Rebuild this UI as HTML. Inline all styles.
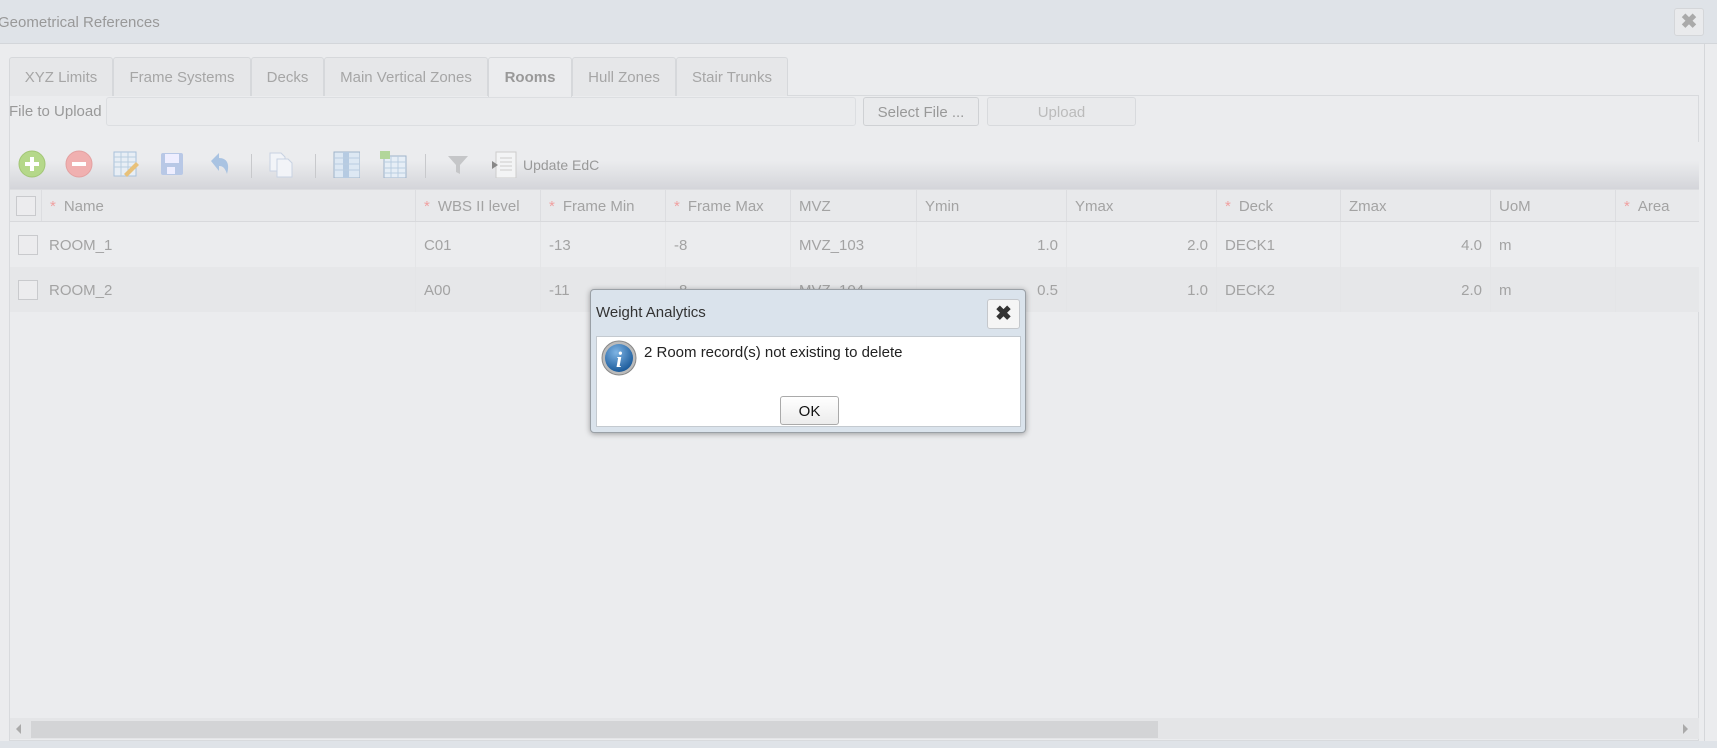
<!DOCTYPE html>
<html><head><meta charset="utf-8"><style>
*{box-sizing:border-box;margin:0;padding:0}
body{width:1717px;height:748px;overflow:hidden;background:#ebecee;font-family:"Liberation Sans",sans-serif;position:relative;color:#999}
.abs{position:absolute}
.title{left:0;top:0;width:1717px;height:44px;background:#dfe3e8;border-bottom:1px solid #d3d6da}
.title span{position:absolute;left:-2px;top:14px;font-size:15px;color:#999}
.xbtn{left:1674px;top:8px;width:30px;height:28px;border:1px solid #d4d6d9;border-radius:3px;background:#e9eaec;color:#aaa;font-size:20px;font-weight:bold;text-align:center;line-height:26px}
.rline{left:1704px;top:44px;width:1px;height:700px;background:#d5d7da}
.tab{top:57px;height:39px;border:1px solid #d6d8db;border-bottom:none;background:#e6e7e9;border-radius:3px 3px 0 0;font-size:15px;color:#a6a6a6;text-align:center;line-height:40px}
.tab.act{background:#ebecee;font-weight:bold;color:#999;height:40px}
.panel{left:9px;top:95px;width:1690px;height:646px;border:1px solid #d8dadd}
.lbl{left:9px;top:103px;font-size:15px;color:#999}
.inp{left:106px;top:97px;width:750px;height:29px;border:1px solid #dcdee1;border-radius:3px;background:#eaebed}
.btn{top:97px;height:29px;border:1px solid #cfd1d4;border-radius:3px;background:#e9eaec;font-size:15px;text-align:center;line-height:29px;color:#999}
.tb{left:10px;top:142px;width:1689px;height:47px;background:linear-gradient(#ebecee 0%,#ebecee 40%,#d4d5da 100%)}
.ic{top:150px;width:28px;height:28px}
.sep{top:154px;width:1px;height:24px;background:#c8c9cc}
.hdr{left:10px;top:189px;width:1689px;height:33px;background:#e8e9eb;border-top:1px solid #dcdde0;border-bottom:1px solid #d8d9dc}
.cell{position:absolute;top:0;height:100%;border-right:1px solid #dcdde0;font-size:15px;line-height:33px;padding-left:8px;white-space:nowrap;color:#a3a3a3}
.st{color:#f0a0a0;margin-right:8px}
.row{left:10px;width:1689px;height:45px}
.row .cell{line-height:47px;border-right:1px solid #e4e5e7}
.r{text-align:right;padding-right:8px}
.cb{position:absolute;left:8px;width:20px;height:20px;border:1px solid #c9cacd;background:#ececee}
.sb{left:10px;top:718px;width:1689px;height:21px;background:#e4e5e7}
.dlg{left:590px;top:289px;width:436px;height:144px;background:#dae3ec;border:1px solid #9aa0a6;border-radius:4px;box-shadow:0 1px 6px rgba(0,0,0,.35)}
</style></head><body>
<div class="abs title"><span>Geometrical References</span></div>
<div class="abs xbtn">✖</div>
<div class="abs rline"></div>
<div class="abs panel"></div>
<div class="abs tab" style="left:9px;width:104px">XYZ Limits</div>
<div class="abs tab" style="left:113px;width:138px">Frame Systems</div>
<div class="abs tab" style="left:251px;width:73px">Decks</div>
<div class="abs tab" style="left:324px;width:164px">Main Vertical Zones</div>
<div class="abs tab act" style="left:488px;width:84px">Rooms</div>
<div class="abs tab" style="left:572px;width:104px">Hull Zones</div>
<div class="abs tab" style="left:676px;width:112px">Stair Trunks</div>
<div class="abs lbl">File to Upload</div>
<div class="abs inp"></div>
<div class="abs btn" style="left:863px;width:116px">Select File ...</div>
<div class="abs btn" style="left:987px;width:149px;color:#bbb;border-color:#d8dadd">Upload</div>
<div class="abs tb"></div>
<svg class="abs ic" style="left:18px" viewBox="0 0 28 28"><circle cx="14" cy="14" r="13" fill="#b5d88a" stroke="#a2c676"/><path d="M14 7v14M7 14h14" stroke="#fff" stroke-width="4"/></svg>
<svg class="abs ic" style="left:65px" viewBox="0 0 28 28"><circle cx="14" cy="14" r="13" fill="#f0b0b0" stroke="#e3a0a0"/><path d="M7 14h14" stroke="#fff" stroke-width="4"/></svg>
<svg class="abs ic" style="left:112px" viewBox="0 0 28 28"><rect x="2" y="2" width="22" height="24" fill="#e8eef5" stroke="#a9c1da"/><path d="M2 7h22M2 12h22M2 17h22M9 2v24M16 2v24" stroke="#b9cde0"/><path d="M12 24l12-12 3 3-12 12z" fill="#e8c17a"/></svg>
<svg class="abs ic" style="left:158px" viewBox="0 0 28 28"><rect x="3" y="3" width="22" height="22" rx="2" fill="#b8c8e6"/><rect x="7" y="4" width="14" height="9" fill="#eef"/><rect x="9" y="17" width="8" height="7" fill="#eef"/></svg>
<svg class="abs ic" style="left:205px" viewBox="0 0 28 28"><path d="M6 11l8-8v5c8 0 11 6 8 16-2-6-4-8-8-8v5z" fill="#a9c3e2"/></svg>
<div class="abs sep" style="left:251px"></div>
<svg class="abs ic" style="left:267px" viewBox="0 0 28 28"><path d="M3 3h11l4 4v14H3z" fill="#f2f4f8" stroke="#c8d2e2"/><path d="M10 9h11l4 4v14H10z" fill="#f2f4f8" stroke="#c8d2e2"/></svg>
<div class="abs sep" style="left:315px"></div>
<svg class="abs ic" style="left:332px" viewBox="0 0 28 28"><rect x="2" y="2" width="26" height="26" fill="#dde8f3" stroke="#9fb3c9"/><rect x="11" y="2" width="6" height="26" fill="#b6cbe2"/><path d="M2 8h26M2 14h26M2 20h26" stroke="#b9cde0"/></svg>
<svg class="abs ic" style="left:379px" viewBox="0 0 28 28"><rect x="5" y="6" width="22" height="22" fill="#e6eef6" stroke="#9fb3c9"/><path d="M5 12h22M5 18h22M5 23h22M12 6v22M19 6v22" stroke="#b9cde0"/><rect x="1" y="1" width="10" height="8" fill="#b2d69a"/></svg>
<div class="abs sep" style="left:425px"></div>
<svg class="abs ic" style="left:444px" viewBox="0 0 28 28"><path d="M4 6h20l-8 9v9l-4-2v-7z" fill="#c5c6c8"/></svg>
<svg class="abs ic" style="left:490px" viewBox="0 0 28 28"><rect x="6" y="2" width="20" height="26" fill="#f3f4f5" stroke="#ccc"/><path d="M10 8h12M10 12h12M10 16h12M10 20h12" stroke="#ccc"/><path d="M2 11l6 4-6 4z" fill="#888"/></svg>
<div class="abs" style="left:523px;top:157px;font-size:14px;color:#999">Update EdC</div>

<div class="abs hdr">
<div class="cell" style="left:0;width:32px;padding:0"><div class="cb" style="top:6px;left:6px"></div></div>
<div class="cell" style="left:32px;width:374px"><span class="st">*</span>Name</div>
<div class="cell" style="left:406px;width:125px"><span class="st">*</span>WBS II level</div>
<div class="cell" style="left:531px;width:125px"><span class="st">*</span>Frame Min</div>
<div class="cell" style="left:656px;width:125px"><span class="st">*</span>Frame Max</div>
<div class="cell" style="left:781px;width:126px">MVZ</div>
<div class="cell" style="left:907px;width:150px">Ymin</div>
<div class="cell" style="left:1057px;width:150px">Ymax</div>
<div class="cell" style="left:1207px;width:124px"><span class="st">*</span>Deck</div>
<div class="cell" style="left:1331px;width:150px">Zmax</div>
<div class="cell" style="left:1481px;width:125px">UoM</div>
<div class="cell" style="left:1606px;width:83px;border:none"><span class="st">*</span>Area</div>
</div>
<div class="abs row" style="top:222px;background:#ebecee">
<div class="cell" style="left:0;width:32px;padding:0;border:none"><div class="cb" style="top:13px"></div></div>
<div class="cell" style="left:32px;width:374px;padding-left:7px">ROOM_1</div>
<div class="cell" style="left:406px;width:125px">C01</div>
<div class="cell" style="left:531px;width:125px">-13</div>
<div class="cell" style="left:656px;width:125px">-8</div>
<div class="cell" style="left:781px;width:126px">MVZ_103</div>
<div class="cell r" style="left:907px;width:150px">1.0</div>
<div class="cell r" style="left:1057px;width:150px">2.0</div>
<div class="cell" style="left:1207px;width:124px">DECK1</div>
<div class="cell r" style="left:1331px;width:150px">4.0</div>
<div class="cell" style="left:1481px;width:125px">m</div>
</div>
<div class="abs row" style="top:267px;background:#e6e7e9">
<div class="cell" style="left:0;width:32px;padding:0;border:none"><div class="cb" style="top:13px"></div></div>
<div class="cell" style="left:32px;width:374px;padding-left:7px">ROOM_2</div>
<div class="cell" style="left:406px;width:125px">A00</div>
<div class="cell" style="left:531px;width:125px">-11</div>
<div class="cell" style="left:656px;width:125px">-8</div>
<div class="cell" style="left:781px;width:126px">MVZ_104</div>
<div class="cell r" style="left:907px;width:150px">0.5</div>
<div class="cell r" style="left:1057px;width:150px">1.0</div>
<div class="cell" style="left:1207px;width:124px">DECK2</div>
<div class="cell r" style="left:1331px;width:150px">2.0</div>
<div class="cell" style="left:1481px;width:125px">m</div>
</div>
<div class="abs sb"></div>
<div class="abs" style="left:31px;top:721px;width:1127px;height:17px;background:#d3d4d6"></div>
<div class="abs" style="left:16px;top:724px;width:0;height:0;border:5px solid transparent;border-right:5px solid #aaa;border-left:0"></div>
<div class="abs" style="left:1683px;top:724px;width:0;height:0;border:5px solid transparent;border-left:5px solid #aaa;border-right:0"></div>
<div class="abs" style="left:0;top:741px;width:1717px;height:7px;background:#dfe3e8"></div>

<div class="abs dlg">
<div class="abs" style="left:5px;top:14px;font-size:15px;color:#333">Weight Analytics</div>
<div class="abs" style="left:396px;top:9px;width:33px;height:30px;border:1px solid #c5c8cc;border-radius:3px;background:#f5f5f5;text-align:center;line-height:28px;font-size:20px;font-weight:bold;color:#333">✖</div>
<div class="abs" style="left:5px;top:46px;width:425px;height:91px;background:#fff;border:1px solid #c4cad0">
<svg class="abs" style="left:4px;top:3px" width="36" height="36" viewBox="0 0 36 36"><defs><radialGradient id="g" cx="40%" cy="30%" r="70%"><stop offset="0" stop-color="#7fb4e4"/><stop offset="1" stop-color="#1c5c9c"/></radialGradient></defs><circle cx="18" cy="18" r="17" fill="#bbb" stroke="#888"/><circle cx="18" cy="18" r="14" fill="url(#g)"/><text x="18" y="27" font-family="Liberation Serif,serif" font-style="italic" font-weight="bold" font-size="22" fill="#fff" text-anchor="middle">i</text></svg>
<div class="abs" style="left:47px;top:7px;font-size:15px;color:#222">2 Room record(s) not existing to delete</div>
<div class="abs" style="left:183px;top:59px;width:59px;height:29px;border:1px solid #aaa;border-radius:3px;background:linear-gradient(#fff,#ececec);text-align:center;line-height:29px;font-size:15px;color:#111">OK</div>
</div>
</div>
</body></html>
